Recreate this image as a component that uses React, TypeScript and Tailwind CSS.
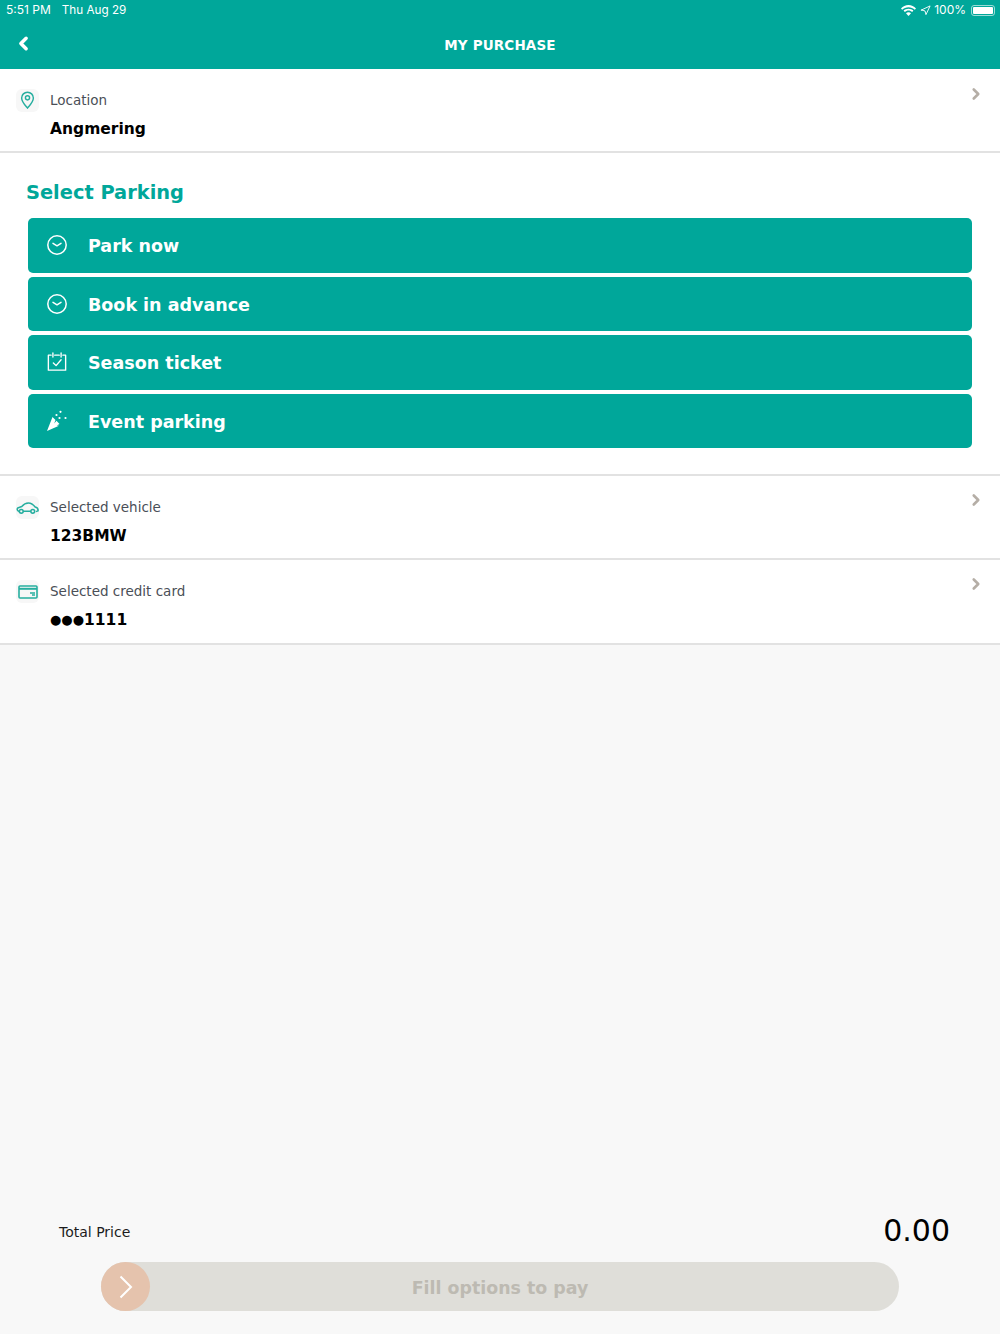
import { ChevronLeft, ChevronRight, Navigation } from "lucide-react";

const ClockIcon = () => (
  <svg width="22" height="22" viewBox="0 0 22 22" fill="none" stroke="white" strokeWidth="1.5" strokeLinecap="round" strokeLinejoin="round">
    <circle cx="11" cy="11" r="9.2" />
    <path d="M7 9.3 L11 11.8 L15 9.3" />
  </svg>
);

const CalendarIcon = () => (
  <svg width="20" height="20" viewBox="0 0 22 22" fill="none" stroke="white" strokeWidth="1.5" strokeLinecap="round" strokeLinejoin="round">
    <path d="M4.5 3.5 H1.5 V20 H20.5 V3.5 H17.5" />
    <path d="M8.5 3.5 H13.5" />
    <path d="M6.5 1 V5.5 M15.5 1 V5.5" />
    <path d="M7 12 L10 15 L15.5 8.5" />
  </svg>
);

const PartyIcon = () => (
  <svg width="22" height="22" viewBox="0 0 22 22" fill="white">
    <path d="M1 21 L6.5 7 L9.5 10 L8.2 13.5 L10.5 10.8 L13.5 14 L10.8 15.5 L13 15.8 Z" />
    <circle cx="10.5" cy="5" r="1.1" />
    <circle cx="14.5" cy="1.8" r="1.1" />
    <circle cx="13.5" cy="8" r="1.1" />
    <circle cx="19.5" cy="8" r="1.1" />
  </svg>
);

const PinIcon = () => (
  <svg width="15" height="18" viewBox="0 0 16 20" fill="none" stroke="#26ae9f" strokeWidth="1.6">
    <path d="M8 19 C5 15.5 1.5 12 1.5 7.8 A6.5 6.5 0 0 1 14.5 7.8 C14.5 12 11 15.5 8 19 Z" />
    <circle cx="8" cy="7.6" r="2.3" />
  </svg>
);

const CarIcon = () => (
  <svg width="23" height="14" viewBox="0 0 24 14" fill="none" stroke="#26ae9f" strokeWidth="1.6" strokeLinecap="round" strokeLinejoin="round">
    <path d="M3 10.5 C1 10 1 8 1.8 7 L6 5.5 C8 3 10 1.8 13 1.8 C16 1.8 18 3.5 20 6 C22 6.5 23.3 7.5 23 10 L21.5 10.5" />
    <path d="M8 10.5 H15" />
    <circle cx="5.5" cy="10.5" r="2" />
    <circle cx="17.5" cy="10.5" r="2" />
  </svg>
);

const CardIcon = () => (
  <svg width="20" height="14" viewBox="0 0 20 14" fill="none" stroke="#26ae9f" strokeWidth="1.6">
    <rect x="1" y="1" width="18" height="12" rx="1" />
    <path d="M1 3.8 H19" strokeWidth="2" />
    <path d="M12 8 H17 M14 10 H17" />
  </svg>
);

const WifiIcon = () => (
  <svg width="15" height="11" viewBox="0 0 15 11" fill="white">
    <path d="M7.5 2.2 C10 2.2 12.2 3.2 13.8 4.8 L15 3.5 C13 1.4 10.4 0 7.5 0 C4.6 0 2 1.4 0 3.5 L1.2 4.8 C2.8 3.2 5 2.2 7.5 2.2 Z" />
    <path d="M7.5 5.4 C8.9 5.4 10.2 6 11.2 6.9 L12.4 5.6 C11.1 4.4 9.4 3.7 7.5 3.7 C5.6 3.7 3.9 4.4 2.6 5.6 L3.8 6.9 C4.8 6 6.1 5.4 7.5 5.4 Z" />
    <path d="M7.5 11 L10 8.2 C9.3 7.6 8.5 7.2 7.5 7.2 C6.5 7.2 5.7 7.6 5 8.2 Z" />
  </svg>
);

const options = [
  { label: "Park now", icon: <ClockIcon /> },
  { label: "Book in advance", icon: <ClockIcon /> },
  { label: "Season ticket", icon: <CalendarIcon /> },
  { label: "Event parking", icon: <PartyIcon /> },
];

type InfoRowProps = {
  label: string;
  value: React.ReactNode;
  icon: React.ReactNode;
  height: string;
  chevronTop: string;
};

const InfoRow = ({ label, value, icon, height, chevronTop }: InfoRowProps) => (
  <div className={`relative border-b-2 border-[#e2e2e2] bg-white pt-[20px] pl-[16px] ${height}`}>
    <div className="flex items-center">
      <div className="flex h-[23px] w-[23px] items-center justify-center rounded-md bg-[#f7f7f7]">{icon}</div>
      <span className="ml-[11px] text-[13.5px] leading-[23px] text-[#4a4f57]">{label}</span>
    </div>
    <div className="mt-[5px] ml-[34px] flex h-[24px] items-center text-[15.5px] leading-[24px] font-bold text-black">{value}</div>
    <ChevronRight className={`absolute right-[15px] h-[18px] w-[18px] text-[#b5aea6] ${chevronTop}`} strokeWidth={3.5} />
  </div>
);

const App = () => {
  return (
    <div className="flex h-[1334px] w-[1000px] flex-col bg-[#f8f8f8] font-['DejaVu_Sans',sans-serif]">
      <div className="h-[68.5px] bg-[#00a79a] text-white">
        <div className="flex h-[20px] items-center justify-between pr-[5px] pl-[6px] font-['Inter',sans-serif] text-[12px]">
          <div className="flex items-baseline gap-[11px]">
            <span>5:51 PM</span>
            <span className="text-[11.7px]">Thu Aug 29</span>
          </div>
          <div className="flex items-center">
            <WifiIcon />
            <Navigation className="ml-[4px] h-[11px] w-[11px]" strokeWidth={2} />
            <span className="ml-[3px]">100%</span>
            <div className="ml-[5px] h-[11px] w-[24px] rounded-[3px] border border-white/60 p-[1px]">
              <div className="h-full w-full rounded-[1px] bg-white" />
            </div>
          </div>
        </div>
        <div className="relative flex h-[49px] items-center justify-center">
          <ChevronLeft className="absolute top-[13px] left-[13px] h-[21px] w-[21px]" strokeWidth={4} />
          <span className="pt-[2px] text-[13.5px] font-bold tracking-[0.15px]">MY PURCHASE</span>
        </div>
      </div>

      <InfoRow label="Location" value="Angmering" icon={<PinIcon />} height="h-[84.5px]" chevronTop="top-[16px]" />

      <div className="h-[323px] border-b-2 border-[#e2e2e2] bg-white">
        <div className="pt-[26px] pl-[26px] text-[19.4px] leading-[27px] font-bold text-[#00a79a]">Select Parking</div>
        <div className="mt-[12px] flex flex-col gap-[4px] px-[28px]">
          {options.map((option) => (
            <div key={option.label} className="flex h-[54.5px] items-center rounded-[5px] bg-[#00a79a] pl-[18px] text-white">
              <div className="flex w-[22px] justify-center">{option.icon}</div>
              <span className="ml-[20px] pt-[2px] text-[17.5px] font-bold">{option.label}</span>
            </div>
          ))}
        </div>
      </div>

      <InfoRow label="Selected vehicle" value="123BMW" icon={<CarIcon />} height="h-[84px]" chevronTop="top-[15px]" />
      <InfoRow
        label="Selected credit card"
        value={
          <>
            <span className="text-[13px]">●●●</span>1111
          </>
        }
        icon={<CardIcon />}
        height="h-[85px]"
        chevronTop="top-[15px]"
      />

      <div className="flex-1" />

      <div className="flex items-center justify-between pr-[50px] pl-[59px]">
        <span className="pt-[3px] text-[14px] text-[#1c1c1c]">Total Price</span>
        <span className="text-[30px] leading-[36px] text-black">0.00</span>
      </div>
      <div className="mx-[101px] mt-[13px] mb-[23px] flex h-[49px] items-center rounded-full bg-[#dfded9]">
        <div className="flex h-[49px] w-[49px] items-center justify-center rounded-full bg-[#e5c3ad]">
          <svg width="16" height="24" viewBox="0 0 16 24" fill="none" stroke="white" strokeWidth="2">
            <path d="M2.5 1.5 L13 12 L2.5 22.5" />
          </svg>
        </div>
        <span className="flex-1 pt-[3px] pr-[49px] text-center text-[17.4px] font-bold text-[#bdbab2]">Fill options to pay</span>
      </div>
    </div>
  );
};

export default App;
